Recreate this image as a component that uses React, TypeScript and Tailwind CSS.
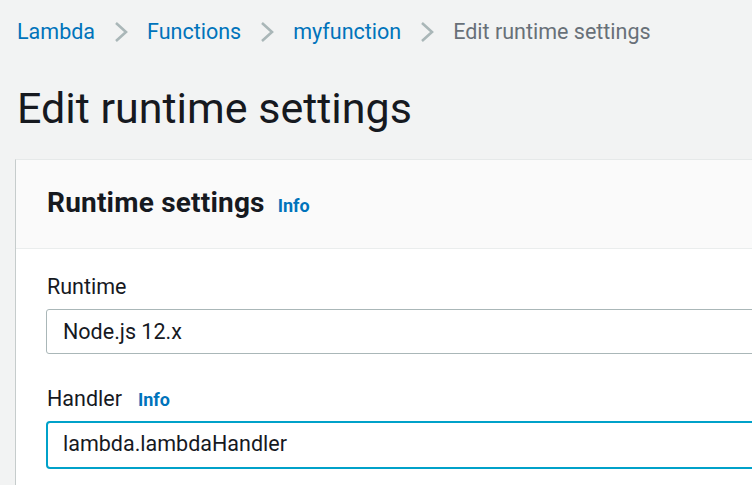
import React from 'react';

const Chevron = () => (
  <svg width="14" height="22" viewBox="0 0 14 22" className="shrink-0 mx-[19px]" aria-hidden="true">
    <polyline points="2,2 12,11 2,20" fill="none" stroke="#aab7b8" strokeWidth={2.6} />
  </svg>
);

const Info = () => (
  <a className="text-[18px] font-bold text-[#0073bb] ml-4 leading-none cursor-pointer">Info</a>
);

export default function App() {
  const crumbs = ['Lambda', 'Functions', 'myfunction'];
  return (
    <div className="w-[752px] h-[485px] overflow-hidden bg-[#f2f3f3] font-['Roboto',sans-serif] text-[#16191f]">
      <nav className="flex items-center pt-[17px] pl-[17px] text-[21.5px] leading-[30px]">
        {crumbs.map((c) => (
          <React.Fragment key={c}>
            <a className="text-[#0073bb] cursor-pointer">{c}</a>
            <Chevron />
          </React.Fragment>
        ))}
        <span className="text-[#687078] whitespace-nowrap">Edit runtime settings</span>
      </nav>

      <h1 className="mt-[33px] pl-[17px] text-[43px] leading-[56px] font-normal whitespace-nowrap">
        Edit runtime settings
      </h1>

      <div className="mt-[23px] ml-[15px] w-[1000px] bg-white border-l border-l-[#c6cccc] border-t border-t-[#e6e9e9] pb-[40px]">
        <div className="bg-[#fafafa] border-b border-[#eaeded] pl-[31px] pt-[25px] pb-[27px] flex items-baseline">
          <h2 className="text-[28px] leading-[36px] font-bold tracking-[0.2px]">Runtime settings</h2>
          <a className="text-[18px] font-bold text-[#0073bb] ml-[13px] leading-none cursor-pointer">Info</a>
        </div>

        <div className="pl-[30px] pt-[23px]">
          <label className="block text-[21.5px] leading-[30px] pl-[1px]">Runtime</label>
          <div className="mt-[7px] h-[45px] border border-[#aab7b8] rounded-[3px] flex items-center pl-[16px] text-[21.5px] leading-[30px]">
            Node.js 12.x
          </div>

          <div className="mt-[30px] flex items-baseline pl-[1px]">
            <label className="text-[21.5px] leading-[30px]">Handler</label>
            <Info />
          </div>
          <div className="mt-[7px] h-[48px] border-2 border-[#00a1c9] rounded-[4px] flex items-center pl-[15px] pb-[2px] text-[21.5px] leading-[30px]">
            lambda.lambdaHandler
          </div>
        </div>
      </div>
    </div>
  );
}
